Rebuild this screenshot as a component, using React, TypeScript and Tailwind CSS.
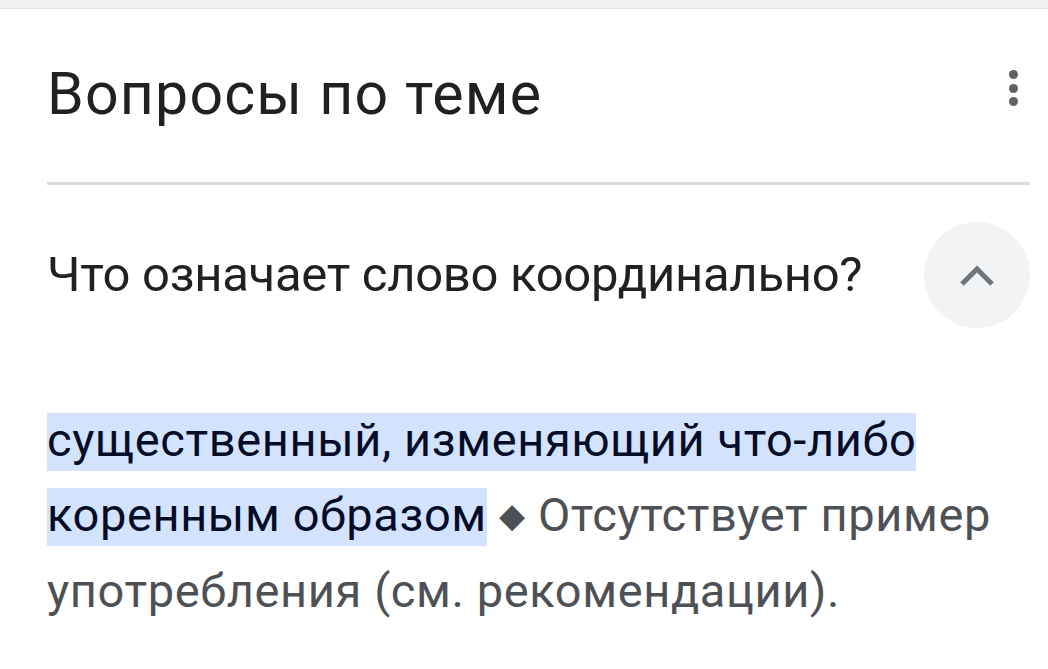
import React from 'react';

export default function App() {
    return (
        <div className="w-[1048px] h-[669px] bg-white overflow-hidden" style={{ fontFamily: 'Roboto, "Noto Sans", sans-serif' }}>
            <div className="h-[9px] bg-[#f1f1f1] border-b border-[#e4e4e4]" />
            <div className="pl-[47px] pr-[18px]">
                <div className="flex items-start justify-between h-[173px]">
                    <h2 className="mt-[50px] text-[59px] leading-[70px] text-[#202124] tracking-[1.2px]">Вопросы по теме</h2>
                    <div className="mt-[61px] mr-[12px] flex flex-col gap-[4.5px] items-center">
                        <span className="w-[9px] h-[9px] rounded-full bg-[#5f6368]" />
                        <span className="w-[9px] h-[9px] rounded-full bg-[#5f6368]" />
                        <span className="w-[9px] h-[9px] rounded-full bg-[#5f6368]" />
                    </div>
                </div>
                <div className="h-[3px] bg-[#dadce0]" />
                <div className="flex items-center justify-between mt-[37px]">
                    <p className="text-[49px] leading-[56px] text-[#202124] tracking-[-0.3px]">Что означает слово координально?</p>
                    <div className="w-[106px] h-[106px] rounded-full bg-[#f1f3f4] flex items-center justify-center">
                        <svg width="36" height="24" viewBox="0 0 36 24" fill="none" stroke="#70757a" strokeWidth="5">
                            <path d="M3 21 L18 6 L33 21" />
                        </svg>
                    </div>
                </div>
                <p className="mt-[74px] text-[47px] leading-[75px] text-[#4d5156] tracking-[0.6px] pr-[10px]">
                    <span className="bg-[linear-gradient(transparent_1px,#d3e3fd_1px)] text-[#040c28] pb-[4px] box-decoration-clone">существенный, изменяющий что-либо коренным образом</span>
                    {' '}<span className="text-[#4d5156] text-[34px] align-[4px]">◆</span> Отсутствует пример употребления (см. рекомендации).
                </p>
            </div>
        </div>
    );
}
